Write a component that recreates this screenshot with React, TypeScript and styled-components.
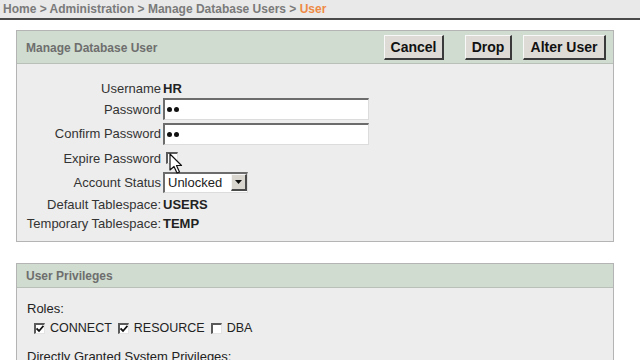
import * as React from 'react';
import styled, { createGlobalStyle } from 'styled-components';

const GlobalStyle = createGlobalStyle`
  html, body {
    margin: 0;
    padding: 0;
    background: #ffffff;
    font-family: "Liberation Sans", Arial, sans-serif;
    overflow: hidden;
  }
`;

const Page = styled.div`
  width: 640px;
  height: 360px;
  overflow: hidden;
`;

const Breadcrumb = styled.div`
  box-sizing: border-box;
  height: 20px;
  line-height: 17px;
  padding: 1px 0 0 3px;
  background: #e9e9e9;
  border-bottom: 2px solid #4a4a4a;
  font-size: 12px;
  font-weight: bold;
  color: #7a7a7a;
  white-space: nowrap;
  overflow: hidden;
`;

const Current = styled.span`
  color: #ee8a45;
`;

const Panel = styled.section<{ $top: number }>`
  margin: ${(p) => p.$top}px 26px 0 16px;
  border: 1px solid #b4b4b4;
  background: #ededed;
`;

const PanelHeader = styled.div<{ $h: number }>`
  height: ${(p) => p.$h}px;
  display: flex;
  align-items: center;
  padding: 0 7px 0 9px;
  background: #cfdccf;
  border-bottom: 1px solid #b8c0b8;
`;

const PanelTitle = styled.div`
  flex: 1;
  padding-top: 1px;
  font-size: 12px;
  font-weight: bold;
  color: #6e6e6e;
`;

const Button = styled.button<{ $w: number; $spaced?: boolean }>`
  width: ${(p) => p.$w}px;
  height: 25px;
  margin: 1px ${(p) => (p.$spaced ? 21 : 11)}px 0 0;
  padding: 0;
  font-family: "Liberation Sans", Arial, sans-serif;
  font-size: 14px;
  font-weight: bold;
  color: #111;
  background: #dedbd6;
  border-style: solid;
  border-width: 1px 2px 2px 1px;
  border-color: #f8f8f8 #3a3a3a #3a3a3a #f8f8f8;
  &:last-child {
    margin-right: 0;
  }
`;

const Form = styled.div`
  padding: 15px 0 9px;
`;

const Row = styled.div<{ $h: number }>`
  display: grid;
  grid-template-columns: 144px auto;
  column-gap: 2px;
  align-items: center;
  height: ${(p) => p.$h}px;
`;

const Label = styled.div`
  text-align: right;
  font-size: 13px;
  color: #333;
  white-space: nowrap;
`;

const Value = styled.div`
  font-size: 13px;
  font-weight: bold;
  color: #222;
`;

const Field = styled.div`
  position: relative;
  display: flex;
  align-items: center;
  padding-left: 3px;
`;

const TextInput = styled.div`
  box-sizing: border-box;
  width: 206px;
  height: 22px;
  background: #fff;
  border-style: solid;
  border-width: 2px 1px 1px 2px;
  border-color: #6c6c6c #dcdcdc #dcdcdc #6c6c6c;
  display: flex;
  align-items: center;
  padding-left: 2px;
  gap: 2px;
`;

const Dot = styled.span`
  width: 5px;
  height: 5px;
  border-radius: 50%;
  background: #111;
`;

const Check = styled.span<{ $size: number }>`
  box-sizing: border-box;
  width: ${(p) => p.$size}px;
  height: ${(p) => p.$size}px;
  background: #fff;
  border-style: solid;
  border-width: 2px 1px 1px 2px;
  border-color: #5a5a5a #e4e4e4 #e4e4e4 #5a5a5a;
  display: inline-flex;
  align-items: center;
  justify-content: center;
  flex: none;
`;

const Select = styled.div`
  box-sizing: border-box;
  width: 85px;
  height: 21px;
  background: #fff;
  border-style: solid;
  border-width: 2px 1px 1px 2px;
  border-color: #6c6c6c #dcdcdc #dcdcdc #6c6c6c;
  display: flex;
  align-items: center;
  font-size: 13px;
  color: #222;
`;

const SelectText = styled.span`
  flex: 1;
  padding-left: 3px;
`;

const SelectArrow = styled.span`
  box-sizing: border-box;
  width: 16px;
  height: 17px;
  background: #d9d6d0;
  border-style: solid;
  border-width: 1px 2px 2px 1px;
  border-color: #f6f6f6 #4a4a4a #4a4a4a #f6f6f6;
  display: flex;
  align-items: center;
  justify-content: center;
`;

const Cursor = styled.svg`
  position: absolute;
  left: 6px;
  top: 1px;
`;

const Body = styled.div`
  padding: 12px 10px 0;
  font-size: 13px;
  color: #222;
`;

const Line = styled.div<{ $h: number }>`
  height: ${(p) => p.$h}px;
  display: flex;
  align-items: center;
`;

const Roles = styled.div`
  display: flex;
  align-items: center;
  padding-left: 7px;
  gap: 5px;
`;

const Role = styled.span`
  font-size: 12.5px;
  color: #222;
  margin-right: 1px;
`;

const Tick = () => (
  <svg width="8" height="8" viewBox="0 0 8 8">
    <path d="M0.5 3.5 L3 6 L7.5 0.8" fill="none" stroke="#111" strokeWidth="1.8" />
  </svg>
);

const roles = [
  { name: 'CONNECT', checked: true },
  { name: 'RESOURCE', checked: true },
  { name: 'DBA', checked: false },
];

export default function App() {
  return (
    <Page>
      <GlobalStyle />
      <Breadcrumb>
        Home &gt; Administration &gt; Manage Database Users &gt; <Current>User</Current>
      </Breadcrumb>

      <Panel $top={10}>
        <PanelHeader $h={32}>
          <PanelTitle>Manage Database User</PanelTitle>
          <Button $w={60} $spaced>Cancel</Button>
          <Button $w={47}>Drop</Button>
          <Button $w={83}>Alter User</Button>
        </PanelHeader>
        <Form>
          <Row $h={18}>
            <Label>Username</Label>
            <Value>HR</Value>
          </Row>
          <Row $h={24}>
            <Label>Password</Label>
            <TextInput>
              <Dot />
              <Dot />
            </TextInput>
          </Row>
          <Row $h={25}>
            <Label>Confirm Password</Label>
            <TextInput>
              <Dot />
              <Dot />
            </TextInput>
          </Row>
          <Row $h={24}>
            <Label>Expire Password</Label>
            <Field>
              <Check $size={12} />
              <Cursor width="14" height="22" viewBox="0 0 14 22">
                <path
                  d="M1 1 L1 17 L5 13.5 L8 20 L10.5 19 L7.5 12.5 L12.5 12.5 Z"
                  fill="#fff"
                  stroke="#111"
                  strokeWidth="1.2"
                  strokeLinejoin="round"
                />
              </Cursor>
            </Field>
          </Row>
          <Row $h={24}>
            <Label>Account Status</Label>
            <Select>
              <SelectText>Unlocked</SelectText>
              <SelectArrow>
                <svg width="7" height="4" viewBox="0 0 7 4">
                  <path d="M0 0 L7 0 L3.5 4 Z" fill="#111" />
                </svg>
              </SelectArrow>
            </Select>
          </Row>
          <Row $h={20}>
            <Label>Default Tablespace:</Label>
            <Value>USERS</Value>
          </Row>
          <Row $h={18}>
            <Label>Temporary Tablespace:</Label>
            <Value>TEMP</Value>
          </Row>
        </Form>
      </Panel>

      <Panel $top={21}>
        <PanelHeader $h={23}>
          <PanelTitle>User Privileges</PanelTitle>
        </PanelHeader>
        <Body>
          <Line $h={17}>Roles:</Line>
          <Line $h={22}>
            <Roles>
              {roles.map((role) => (
                <React.Fragment key={role.name}>
                  <Check $size={11}>{role.checked && <Tick />}</Check>
                  <Role>{role.name}</Role>
                </React.Fragment>
              ))}
            </Roles>
          </Line>
          <Line $h={34}>Directly Granted System Privileges:</Line>
        </Body>
      </Panel>
    </Page>
  );
}
